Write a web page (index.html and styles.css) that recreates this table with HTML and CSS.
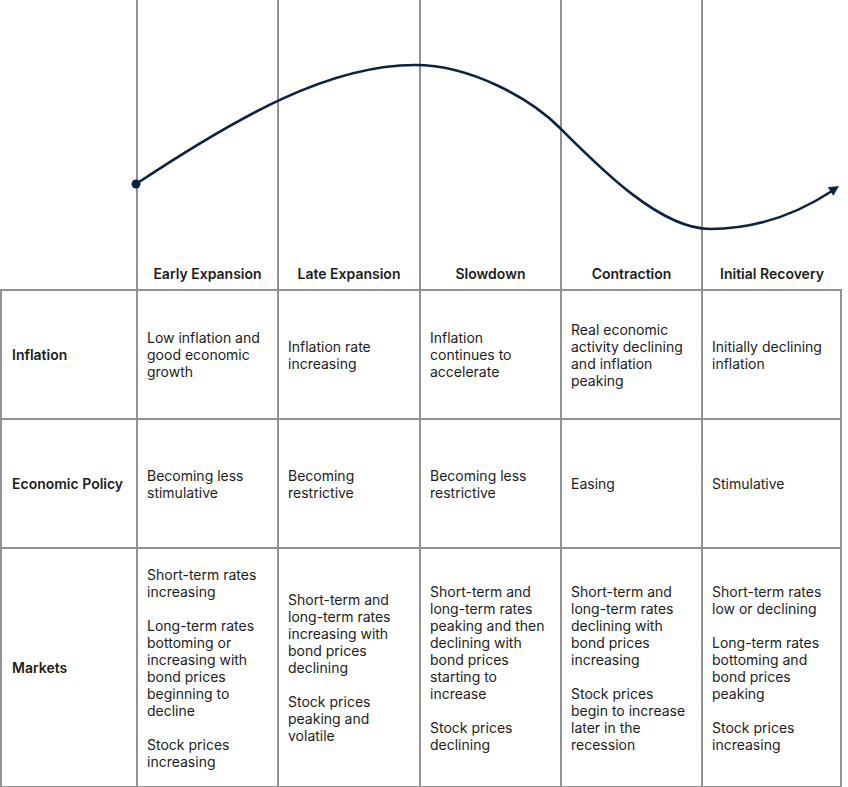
FILE: index.html
```html
<!DOCTYPE html>
<html lang="en">
<head>
    <meta charset="UTF-8">
    <meta name="viewport" content="width=device-width, initial-scale=1.0">
    <title>Business Cycle Phases</title>
    <link rel="stylesheet" href="styles.css">
</head>
<body>
    <div class="cycle">
        <table class="cycle-table">
            <colgroup>
                <col class="label-col">
                <col class="phase-col">
                <col class="phase-col wide">
                <col class="phase-col">
                <col class="phase-col">
                <col class="phase-col last">
            </colgroup>
            <tr class="curve-row">
                <td class="blank"></td>
                <td class="lane"></td>
                <td class="lane"></td>
                <td class="lane"></td>
                <td class="lane"></td>
                <td class="lane"></td>
            </tr>
            <tr class="phase-row">
                <th class="blank"></th>
                <th class="phase">Early Expansion</th>
                <th class="phase">Late Expansion</th>
                <th class="phase">Slowdown</th>
                <th class="phase">Contraction</th>
                <th class="phase">Initial Recovery</th>
            </tr>
            <tr class="row">
                <th class="row-label">Inflation</th>
                <td>Low inflation and good economic growth</td>
                <td>Inflation rate increasing</td>
                <td>Inflation continues to accelerate</td>
                <td>Real economic activity declining and inflation peaking</td>
                <td>Initially declining inflation</td>
            </tr>
            <tr class="row">
                <th class="row-label">Economic Policy</th>
                <td>Becoming less stimulative</td>
                <td>Becoming restrictive</td>
                <td>Becoming less restrictive</td>
                <td>Easing</td>
                <td>Stimulative</td>
            </tr>
            <tr class="row markets">
                <th class="row-label">Markets</th>
                <td>
                    <p>Short-term rates increasing</p>
                    <p>Long-term rates bottoming or increasing with bond prices beginning to decline</p>
                    <p>Stock prices increasing</p>
                </td>
                <td>
                    <p>Short-term and long-term rates increasing with bond prices declining</p>
                    <p>Stock prices peaking and volatile</p>
                </td>
                <td>
                    <p>Short-term and long-term rates peaking and then declining with bond prices starting to increase</p>
                    <p>Stock prices declining</p>
                </td>
                <td>
                    <p>Short-term and long-term rates declining with bond prices increasing</p>
                    <p>Stock prices begin to increase later in the recession</p>
                </td>
                <td>
                    <p>Short-term rates low or declining</p>
                    <p>Long-term rates bottoming and bond prices peaking</p>
                    <p>Stock prices increasing</p>
                </td>
            </tr>
        </table>

        <!-- the cycle curve sits over the top lanes -->
        <svg class="curve" width="848" height="260" viewBox="0 0 848 260">
            <path d="M136 184 C240 115 330 65 415 65 C470 65 530 98 560 128 C600 168 660 229 710 229 C760 229 800 212 832 191" />
            <circle cx="136" cy="184" r="4.5" />
            <polygon points="839,186 833.4,195.7 827.9,187.3" />
        </svg>
    </div>
</body>
</html>
```

FILE: styles.css
```css
body {
    margin: 0;
    background-color: #ffffff;
    font-family: Inter, "DejaVu Sans", sans-serif;
    color: #1c1c1c;
}

.cycle {
    position: relative;
    width: 840px;
}

.cycle-table {
    width: 840px;
    table-layout: fixed;
    border-collapse: collapse;
    font-size: 14px;
    line-height: 17px;
}

.label-col {
    width: 136px;
}

.phase-col {
    width: 141px;
}

.phase-col.wide {
    width: 142px;
}

.phase-col.last {
    width: 139px;
}

.cycle-table td,
.cycle-table th {
    padding: 0 9px;
    text-align: left;
    vertical-align: middle;
}

.curve-row td {
    height: 259px;
    padding: 0;
}

.curve-row .lane,
.phase-row .phase {
    border-left: 2px solid #929292;
}

.phase-row th {
    height: 24px;
    padding: 0;
    font-weight: 600;
    text-align: center;
    vertical-align: top;
    border-bottom: 2px solid #929292;
}

.phase-row .phase {
    padding-top: 6px;
}

.row td,
.row th {
    height: 127px;
    border: 2px solid #929292;
    font-weight: 400;
}

.row .row-label {
    font-weight: 600;
    padding-left: 10px;
}

.markets td,
.markets th {
    height: 237px;
}

.markets p {
    margin: 0 0 17px;
}

.markets p:last-child {
    margin-bottom: 0;
}

.curve {
    position: absolute;
    top: 0;
    left: 0;
    pointer-events: none;
}

.curve path {
    fill: none;
    stroke: #0c2340;
    stroke-width: 2.6;
}

.curve circle,
.curve polygon {
    fill: #0c2340;
}
```
